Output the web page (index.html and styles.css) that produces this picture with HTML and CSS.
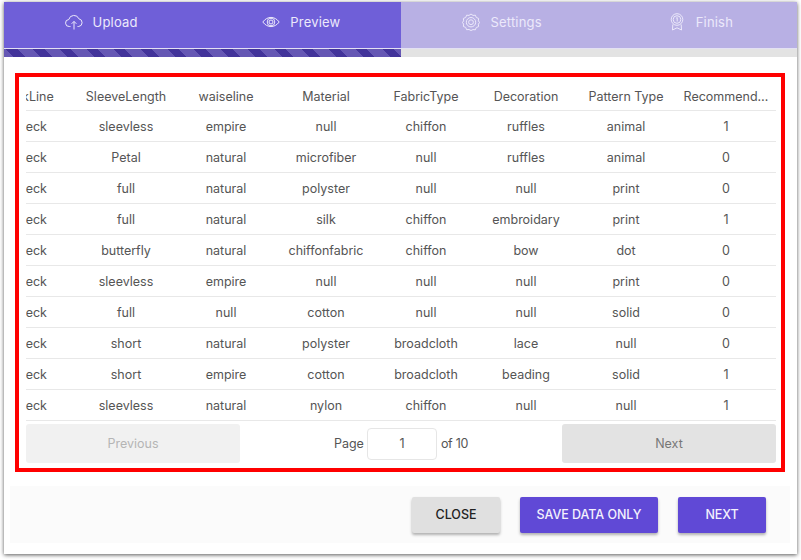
FILE: index.html
```html
<!DOCTYPE html>
<html lang="en">
<head>
<meta charset="utf-8">
<title>Preview</title>
<link rel="stylesheet" href="styles.css">
</head>
<body>
<main class="panel">
  <nav class="tabs">
    <div class="tab on t1">
      <svg class="ico" viewBox="0 0 18 18"><path d="M5.500 13.500H4.300a3.500 3.500 0 0 1-.5-7A5.300 5.300 0 0 1 13.900 5.800a3.900 3.900 0 0 1-.2 7.700H12.500M9 16.500V8.500M6.600 10.800 9 8.400l2.400 2.400"/></svg>
      <span>Upload</span>
    </div>
    <div class="tab on">
      <svg class="ico" viewBox="0 0 18 18"><path d="M.8 9C3 6 6 4.400 9 4.400S15 6 17.200 9C15 12 12 13.600 9 13.600S3 12 .8 9Z"/><circle cx="9" cy="9" r="3.800"/><circle cx="9" cy="9" r="2"/></svg>
      <span>Preview</span>
    </div>
    <div class="tab off t3">
      <svg class="ico" viewBox="0 0 18 18"><path d="M9 1l2 1.400 2.400-.2.900 2.300 2.300.9-.2 2.400L17.500 9.500l-1.100 1.700.2 2.400-2.300.9-.9 2.300-2.400-.2L9 17.500l-2-1-2.400.2-.9-2.300-2.300-.9.2-2.400L.5 9.500l1.100-1.700-.2-2.400 2.300-.9.9-2.300 2.400.2Z"/><circle cx="9" cy="9.200" r="4.700"/><circle cx="9" cy="9.200" r="2.400"/></svg>
      <span>Settings</span>
    </div>
    <div class="tab off t4">
      <svg class="ico" viewBox="0 0 18 18"><circle cx="9" cy="6.500" r="5.800"/><circle cx="9" cy="6.500" r="3.800"/><path d="M4.800 11.500 4.500 17l4.500-2.200L13.500 17l-.3-5.500M8.200 5.200 9.200 4.500V8.500"/></svg>
      <span>Finish</span>
    </div>
  </nav>
  <div class="progress"><div class="stripes"></div></div>
  <section class="content">
    <div class="frame">
      <div class="scroll">
        <table class="grid">
          <thead>
            <tr><th class="first"><span class="shift">NeckLine</span></th><th>SleeveLength</th><th>waiseline</th><th>Material</th><th>FabricType</th><th>Decoration</th><th>Pattern Type</th><th>Recommend…</th></tr>
          </thead>
          <tbody>
            <tr><td class="first"><span class="shift">o-neck</span></td><td>sleevless</td><td>empire</td><td>null</td><td>chiffon</td><td>ruffles</td><td>animal</td><td>1</td></tr>
            <tr><td class="first"><span class="shift">o-neck</span></td><td>Petal</td><td>natural</td><td>microfiber</td><td>null</td><td>ruffles</td><td>animal</td><td>0</td></tr>
            <tr><td class="first"><span class="shift">o-neck</span></td><td>full</td><td>natural</td><td>polyster</td><td>null</td><td>null</td><td>print</td><td>0</td></tr>
            <tr><td class="first"><span class="shift">o-neck</span></td><td>full</td><td>natural</td><td>silk</td><td>chiffon</td><td>embroidary</td><td>print</td><td>1</td></tr>
            <tr><td class="first"><span class="shift">o-neck</span></td><td>butterfly</td><td>natural</td><td>chiffonfabric</td><td>chiffon</td><td>bow</td><td>dot</td><td>0</td></tr>
            <tr><td class="first"><span class="shift">o-neck</span></td><td>sleevless</td><td>empire</td><td>null</td><td>null</td><td>null</td><td>print</td><td>0</td></tr>
            <tr><td class="first"><span class="shift">o-neck</span></td><td>full</td><td>null</td><td>cotton</td><td>null</td><td>null</td><td>solid</td><td>0</td></tr>
            <tr><td class="first"><span class="shift">o-neck</span></td><td>short</td><td>natural</td><td>polyster</td><td>broadcloth</td><td>lace</td><td>null</td><td>0</td></tr>
            <tr><td class="first"><span class="shift">o-neck</span></td><td>short</td><td>empire</td><td>cotton</td><td>broadcloth</td><td>beading</td><td>solid</td><td>1</td></tr>
            <tr><td class="first"><span class="shift">o-neck</span></td><td>sleevless</td><td>natural</td><td>nylon</td><td>chiffon</td><td>null</td><td>null</td><td>1</td></tr>
          </tbody>
        </table>
      </div>
      <div class="pager">
        <button class="page-btn prev" type="button">Previous</button>
        <div class="page-info">
          <span>Page</span>
          <span class="page-input">1</span>
          <span class="page-total">of 10</span>
        </div>
        <button class="page-btn nxt" type="button">Next</button>
      </div>
    </div>
  </section>
  <footer class="actions">
    <button class="act grey" type="button">CLOSE</button>
    <button class="act purple wide" type="button">SAVE DATA ONLY</button>
    <button class="act purple" type="button">NEXT</button>
  </footer>
</main>
</body>
</html>
```

FILE: styles.css
```css
* { box-sizing: border-box; }
html, body { margin: 0; height: 100%; background: #fff; }
body { padding: 2px 4px 6px 4px; font-family: "Inter", "Open Sans", sans-serif; color: #4a4a4a; overflow: hidden; }
.panel { width: 793px; height: 552px; background: #fff; box-shadow: 0 1px 4px rgba(0,0,0,.65); display: flex; flex-direction: column; }
.tabs { display: flex; height: 46px; flex: none; }
.tab { flex: 0 0 25%; display: flex; align-items: center; justify-content: center; gap: 10px; font-size: 13px; letter-spacing: .2px; padding-bottom: 6px; color: #ece9fb; }
.tab.on { background: #6f5fd8; }
.tab.off { background: #b8b0e4; }
.t1 { padding-right: 4px; }
.t3 { padding-left: 5px; }
.t4 { padding-left: 5px; }
.ico { width: 18px; height: 18px; flex: none; fill: none; stroke: currentColor; stroke-width: 1; }
.progress { height: 9px; flex: none; background: #e3e3e3; border-top: 1px solid #e3e1f3; }
.stripes { width: 397px; height: 8px; background: repeating-linear-gradient(45deg, #6557b4 0 7px, #42339a 7px 15px, #6557b4 15px 19px); }
.content { flex: none; padding: 16px 12px 0 11px; }
.frame { height: 399px; border: 4px solid #f00; padding: 3px 5px 0 7px; }
.scroll { overflow: hidden; }
.grid { width: 750px; border-collapse: separate; border-spacing: 0; table-layout: fixed; font-size: 12.500px; }
.grid th, .grid td { text-align: center; padding: 0; white-space: nowrap; overflow: hidden; border-bottom: 1px solid #e8e8e8; color: #555; }
.grid th { font-weight: 400; height: 31px; padding-top: 2px; }
.grid td { height: 31px; }
.grid th.first, .grid td.first { width: 50px; }
.shift { display: block; margin-left: -50px; width: 100px; }
.pager { display: flex; align-items: center; justify-content: space-between; padding-top: 3px; }
.page-btn { width: 214px; height: 39px; border: 0; border-radius: 3px; font: inherit; font-size: 12.500px; }
.prev { background: #f1f1f1; color: #b5b5b5; }
.nxt { background: #e3e3e3; color: #777; }
.page-info { display: flex; align-items: center; gap: 3px; font-size: 12.500px; color: #555; }
.page-input { width: 70px; height: 32px; display: flex; align-items: center; justify-content: center; border: 1px solid #e6e6e6; border-radius: 4px; }
.page-total { margin-left: 1px; letter-spacing: -.3px; }
.actions { flex: none; margin: 14px 7px 0 6px; height: 57px; background: #fbfbfb; display: flex; justify-content: flex-end; align-items: center; gap: 20px; padding-right: 24px; }
.act { height: 36px; width: 88px; border: 0; border-radius: 2px; font: inherit; font-size: 12.500px; font-weight: 500; letter-spacing: -.05px; box-shadow: 0 2px 3px rgba(0,0,0,.3); }
.grey { background: #e0e0e0; color: #222; }
.purple { background: #6049d6; color: #f3f1fd; }
.wide { width: 138px; }
```
